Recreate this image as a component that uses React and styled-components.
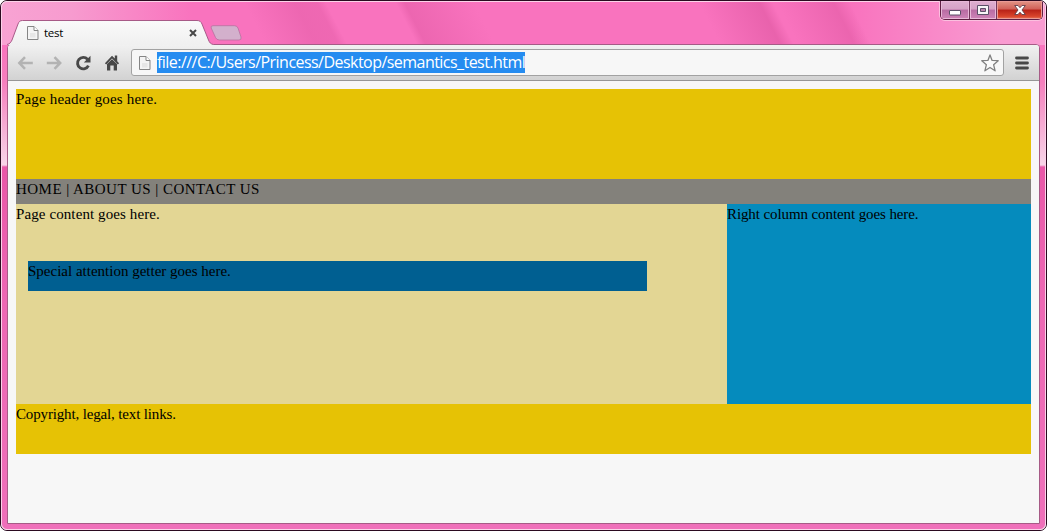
import React from "react";
import styled, { createGlobalStyle } from "styled-components";


const PageIcon = () => (
    <svg width="12" height="14" viewBox="0 0 12 14">
        <path d="M.5 .5h6.500l4 4v9h-10.500z" fill="#f4f4f4" stroke="#858585" />
        <path d="M7 .5v4h4" fill="#fff" stroke="#858585" />
        <path d="M3 7h5.500v4.500h-5.500z" fill="#e6e6e6" />
    </svg>
);

const Arrow = ({ flip }) => (
    <svg width="16" height="14" viewBox="0 0 16 14">
        <path
            d={flip ? "M8.500 1.200L14.200 7l-5.700 5.800M14 7H.8" : "M8 1.200L2.300 7l5.700 5.800M2.500 7h13.300"}
            fill="none"
            stroke="#b3b3b3"
            strokeWidth="2.500"
        />
    </svg>
);

const ReloadIcon = () => (
    <svg width="16" height="16" viewBox="0 0 16 16">
        <path d="M12.500 4.300A5.700 5.700 0 1 0 13.400 10.600" fill="none" stroke="#484848" strokeWidth="2.900" />
        <path d="M15.500 .8v6.700h-6.700z" fill="#484848" />
    </svg>
);

const HomeIcon = () => (
    <svg width="16" height="16" viewBox="0 0 16 16">
        <path d="M8 .8L.9 8.200l1.300 1.200L8 3.600l5.800 5.800 1.300-1.200-1.900-2V.6h-2.400v3z" fill="#484848" />
        <path d="M3 9L8 4.300l5 4.700v6.500H9.700v-5H6.300v5H3z" fill="#484848" />
    </svg>
);

const StarIcon = () => (
    <svg width="18" height="18" viewBox="0 0 18 18">
        <path
            d="M9 .9l2.100 5.500 6.100.3-4.600 4 1.500 6.100L9 13.500l-5.100 3.300 1.500-6.100-4.600-4 6.100-.3z"
            fill="#fafafa"
            stroke="#808080"
            strokeWidth="1.300"
            strokeLinejoin="round"
        />
    </svg>
);

const App = () => {
    return (
        <Window>
            <GlobalStyle />
            <Frame>
                <TabStrip>
                    <Tab>
                        <TabShape width="208" height="25" viewBox="0 0 208 25">
                            <defs>
                                <linearGradient id="tab" x1="0" y1="0" x2="0" y2="1">
                                    <stop offset="0" stopColor="#fafafa" />
                                    <stop offset="1" stopColor="#f0f0f0" />
                                </linearGradient>
                            </defs>
                            <path
                                d="M0 25C3 24 4 22 5 20L11 4C12 1.500 13 .5 15.500 .5H190C192.500 .5 194 1.500 195 4L201.500 20C202.500 22.500 203.500 24 206.500 24.500V25z"
                                fill="url(#tab)"
                            />
                            <path
                                d="M0 24.500C3 24 4 22 5 20L11 4C12 1.500 13 .5 15.500 .5H190C192.500 .5 194 1.500 195 4L201.500 20C202.500 22.500 203.500 24 206.500 24.500"
                                fill="none"
                                stroke="#a75a87"
                            />
                        </TabShape>
                        <PageIcon />
                        <TabTitle>test</TabTitle>
                        <svg width="8" height="8" viewBox="0 0 8 8">
                            <path d="M1 1l6 6M7 1L1 7" stroke="#484848" strokeWidth="2" />
                        </svg>
                    </Tab>
                    <NewTab width="32" height="16" viewBox="0 0 32 16">
                        <path
                            d="M3 .7H24.500Q27 .7 28 3L31 12Q31.800 15 29 15H9.500Q6.500 15 5.500 12.500L1.200 3Q.5 .7 3 .7z"
                            fill="#d3b0cc"
                            stroke="#b8719e"
                            strokeWidth=".8"
                        />
                    </NewTab>
                    <Controls>
                        <Control $width={28}>
                            <MinimizeIcon width="12" height="6" viewBox="0 0 12 6">
                                <rect x=".5" y=".5" width="11" height="4.500" rx=".5" fill="#fff" stroke="#5b5068" />
                            </MinimizeIcon>
                        </Control>
                        <Control $width={27}>
                            <svg width="12" height="10" viewBox="0 0 12 10">
                                <path d="M.5 .5h11v9H.5z" fill="#f7f5f7" stroke="#5b5068" />
                                <path d="M3.500 3.500h5v3h-5z" fill="#bd7fae" stroke="#5b5068" />
                            </svg>
                        </Control>
                        <Control $width={46} $close>
                            <svg width="12" height="10" viewBox="0 0 12 10">
                                <path
                                    d="M.7 .5h3.300L6 2.700 8 .5h3.300L8 5l3.300 4.500H8L6 7.200 4 9.500H.7L4 5z"
                                    fill="#fff"
                                    stroke="#60404b"
                                    strokeWidth=".9"
                                />
                            </svg>
                        </Control>
                    </Controls>
                </TabStrip>
                <Browser>
                    <Toolbar>
                        <Nav>
                            <Arrow />
                            <Arrow flip />
                            <ReloadIcon />
                            <HomeIcon />
                        </Nav>
                        <AddressBar>
                            <PageIcon />
                            <Url>file:///C:/Users/Princess/Desktop/semantics_test.html</Url>
                            <StarIcon />
                        </AddressBar>
                        <svg width="14" height="14" viewBox="0 0 14 14">
                            <path d="M1.500 2h11M1.500 7h11M1.500 12h11" stroke="#484848" strokeWidth="2.800" strokeLinecap="round" />
                        </svg>
                    </Toolbar>
                    <Page>
                        <Header>
                            <Text $spacing={0.17}>Page header goes here.</Text>
                        </Header>
                        <Menu>
                            <Text $spacing={0.46}>HOME | ABOUT US | CONTACT US</Text>
                        </Menu>
                        <Columns>
                            <Content>
                                <Text $spacing={0.1}>Page content goes here.</Text>
                                <Attention>
                                    <Text $spacing={0}>Special attention getter goes here.</Text>
                                </Attention>
                            </Content>
                            <RightColumn>
                                <Text $spacing={-0.1}>Right column content goes here.</Text>
                            </RightColumn>
                        </Columns>
                        <Footer>
                            <Text $spacing={-0.15}>Copyright, legal, text links.</Text>
                        </Footer>
                    </Page>
                </Browser>
            </Frame>
        </Window>
    );
}

const GlobalStyle = createGlobalStyle`
    body {
        margin: 0;
        background: #fff;
        overflow: hidden;
    }

    svg {
        display: block;
        flex-shrink: 0;
    }
`;

const Window = styled.div`
    width: 1047px;
    height: 531px;
    box-sizing: border-box;
    border: 1px solid #2b0a20;
    border-radius: 7px;
    overflow: hidden;
`;

const Frame = styled.div`
    height: 529px;
    box-sizing: border-box;
    border: 1px solid #fbd3e9;
    border-radius: 6px;
    padding: 0 5px 5px;
    background:
        linear-gradient(90deg, #f8a3d3 0, #f79bcf 70px, rgba(249, 115, 190, 0) 190px) 0 0 / 100% 43px no-repeat,
        linear-gradient(90deg, rgba(249, 155, 210, 0) 850px, #f99bd1 1000px) 0 0 / 100% 43px no-repeat,
        linear-gradient(63deg, rgba(226, 91, 165, 0) 235px, rgba(226, 91, 165, .5) 280px, rgba(226, 91, 165, .45) 300px, rgba(226, 91, 165, 0) 308px) 0 0 / 100% 43px no-repeat,
        linear-gradient(63deg, rgba(226, 91, 165, 0) 370px, rgba(226, 91, 165, .55) 378px, rgba(226, 91, 165, 0) 440px) 0 0 / 100% 43px no-repeat,
        linear-gradient(63deg, rgba(226, 91, 165, 0) 640px, rgba(226, 91, 165, .7) 694px, rgba(226, 91, 165, 0) 706px) 0 0 / 100% 43px no-repeat,
        linear-gradient(63deg, rgba(226, 91, 165, 0) 710px, rgba(226, 91, 165, .6) 760px, rgba(226, 91, 165, 0) 775px) 0 0 / 100% 43px no-repeat,
        linear-gradient(180deg, #f973be 0, #f973be 43px, #f57fbd 80px, #f7d5e8 163px, #e957a8 165px, #ed68b4 300px, #ef70ba 529px);
`;

const TabStrip = styled.div`
    display: flex;
    align-items: flex-start;
    height: 42px;
`;

const Tab = styled.div`
    display: flex;
    align-items: center;
    position: relative;
    width: 170px;
    height: 25px;
    margin-top: 18px;
    padding: 0 15px 0 20px;
    isolation: isolate;
    z-index: 1;
`;

const TabShape = styled.svg`
    position: absolute;
    left: 0;
    top: 0;
    z-index: -1;
`;

const TabTitle = styled.span`
    flex: 1;
    margin-left: 5px;
    font: 11.5px "Open Sans", "Noto Sans", sans-serif;
    letter-spacing: -0.3px;
    color: #000;
`;

const NewTab = styled.svg`
    margin: 23px 0 0 -2px;
`;

const Controls = styled.div`
    display: flex;
    box-sizing: border-box;
    height: 19px;
    margin-left: auto;
    margin-right: -3px;
    margin-top: -1px;
    border: 1px solid #602044;
    border-top: 0;
    border-radius: 0 0 5px 5px;
    overflow: hidden;
    box-shadow: 0 0 0 1px #fbc0df;
`;

const Control = styled.div`
    display: flex;
    align-items: center;
    justify-content: center;
    box-sizing: border-box;
    width: ${(props) => props.$width}px;
    border-left: ${(props) => (props.$width === 28 ? "0" : "1px solid #70375b")};
    box-shadow: inset 0 0 0 1px ${(props) => (props.$close ? "#eb9b96" : "#e8b8d8")};
    background: ${(props) =>
        props.$close
            ? "linear-gradient(#e39587 0, #d16057 45%, #b82217 50%, #d8442c 85%, #e77b5c 100%)"
            : "linear-gradient(#dfafd0 0, #d6a1c6 45%, #b86ca3 50%, #cf84b8 100%)"};
`;

const MinimizeIcon = styled.svg`
    margin-top: 5px;
`;

const Browser = styled.div`
    box-sizing: border-box;
    height: 480px;
    border: 1px solid #a65b86;
    border-radius: 4px 4px 0 0;
    background: #f7f7f7;
    overflow: hidden;
`;

const Toolbar = styled.div`
    display: flex;
    align-items: center;
    box-sizing: border-box;
    height: 36px;
    padding: 0 10px 0 9px;
    border-bottom: 1px solid #969696;
    background: linear-gradient(#f1f1f1, #d2d2d2);
`;

const Nav = styled.div`
    display: flex;
    align-items: center;
    gap: 13px;
    margin-right: 11px;
`;

const AddressBar = styled.div`
    display: flex;
    align-items: center;
    flex: 1;
    box-sizing: border-box;
    height: 27px;
    margin-right: 11px;
    padding: 0 4px 0 7px;
    border: 1px solid #a2a2a2;
    border-radius: 3px;
    background: #f7f7f7;

    > svg:last-child {
        margin-left: auto;
    }
`;

const Url = styled.span`
    height: 21px;
    margin-left: 6px;
    font: 16px/21px "Open Sans", "Noto Sans", sans-serif;
    letter-spacing: -0.54px;
    white-space: nowrap;
    color: #fff;
    background: #268cf0;
`;

const Page = styled.div`
    padding: 8px;
    color: #000;
`;

const Text = styled.div`
    font: 15px/21px "Liberation Serif", "Times New Roman", serif;
    letter-spacing: ${(props) => props.$spacing}px;
    white-space: nowrap;
`;

const Header = styled.div`
    height: 90px;
    background: #e6c205;
`;

const Menu = styled.div`
    height: 25px;
    background: #83817b;
`;

const Columns = styled.div`
    display: grid;
    grid-template-columns: 711px 1fr;
    height: 200px;
`;

const Content = styled.div`
    background: #e3d694;
`;

const Attention = styled.div`
    width: 619px;
    height: 30px;
    margin: 36px 0 0 12px;
    background: #005f91;
`;

const RightColumn = styled.div`
    background: #058bbd;
`;

const Footer = styled.div`
    height: 50px;
    background: #e6c205;
`;

export default App;
